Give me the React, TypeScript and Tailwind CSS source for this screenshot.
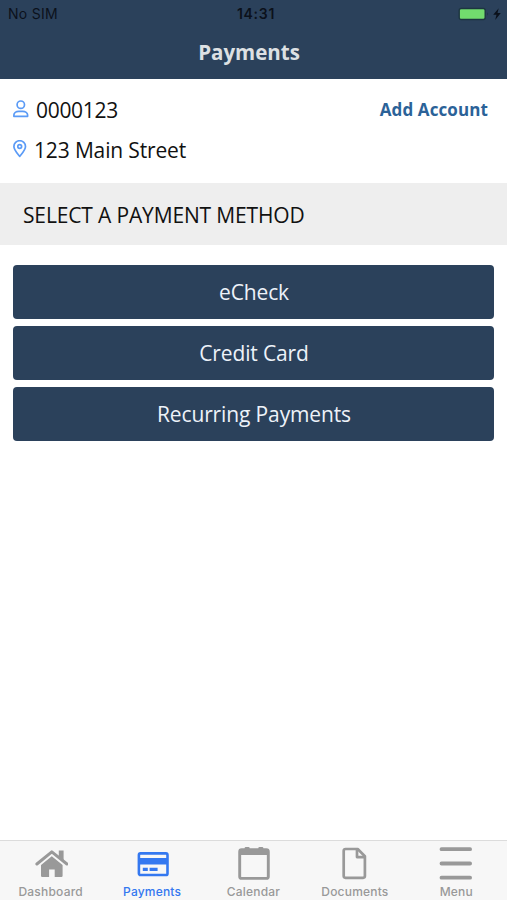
import type { ReactNode } from "react";

const methods = ["eCheck", "Credit Card", "Recurring Payments"];

function HomeIcon() {
  return (
    <svg viewBox="0 0 34 34" className="h-[34px] w-[34px]" fill="currentColor">
      <path d="M17.8 9.2 28.6 18v10.8a1.2 1.2 0 0 1-1.2 1.2h-6.7v-7.6h-5.6V30H8.2A1.2 1.2 0 0 1 7 28.8V18z" />
      <path
        d="M2.9 17 17.8 4.9 32.9 17"
        fill="none"
        stroke="currentColor"
        strokeWidth="3"
        strokeLinecap="round"
        strokeLinejoin="round"
      />
      <path d="M24.8 3.4h4.8v11.4L24.8 11z" />
    </svg>
  );
}

function CardIcon() {
  return (
    <svg viewBox="0 0 34 34" className="h-[34px] w-[34px]" fill="currentColor">
      <rect x="3.9" y="6.4" width="28.6" height="21.6" rx="1.6" fill="none" stroke="currentColor" strokeWidth="2.6" />
      <path d="M3 11h30v6.4H3zM7.8 20.7h5V24h-5zM14.6 20.7h8V24h-8z" />
    </svg>
  );
}

function CalendarIcon() {
  return (
    <svg viewBox="0 0 34 34" className="h-[34px] w-[34px]" fill="currentColor">
      <rect x="2.7" y="2.8" width="28.6" height="28.6" rx="2" fill="none" stroke="currentColor" strokeWidth="2.9" />
      <path d="M2.4 2.6h29.2V8H2.4zM7.6 1.3A1.2 1.2 0 0 1 8.8.1h2.7a1.2 1.2 0 0 1 1.2 1.2V3H7.6zM21.3 1.3A1.2 1.2 0 0 1 22.5.1h2.7a1.2 1.2 0 0 1 1.2 1.2V3h-5.1z" />
    </svg>
  );
}

function DocumentIcon() {
  return (
    <svg viewBox="0 0 34 34" className="h-[34px] w-[34px]" fill="none" stroke="currentColor" strokeWidth="2.7" strokeLinejoin="round">
      <path d="M7.4 2h12.3l7.2 7.2v19.9a1.7 1.7 0 0 1-1.7 1.7H7.4a1.7 1.7 0 0 1-1.7-1.7V3.7A1.7 1.7 0 0 1 7.4 2z" />
      <path d="M19 2.4v7.7h7.7" />
    </svg>
  );
}

function MenuIcon() {
  return (
    <svg viewBox="0 0 34 34" className="h-[34px] w-[34px]" fill="none" stroke="currentColor" strokeWidth="3.8" strokeLinecap="round">
      <path d="M2.5 2.2h28.6M2.5 16.5h28.6M2.5 30.7h28.6" />
    </svg>
  );
}

function Tab({ label, active, children }: { label: string; active?: boolean; children: ReactNode }) {
  return (
    <button
      className={`flex flex-1 basis-0 flex-col items-center pt-[6px] ${
        active ? "text-[#3478f0]" : "text-[#999999]"
      }`}
    >
      {children}
      <span className="mt-[3px] font-[Inter,sans-serif] text-[12px] leading-[15px] font-medium tracking-[0.2px]">
        {label}
      </span>
    </button>
  );
}

export default function App() {
  return (
    <div className="flex h-[900px] w-full flex-col bg-white font-['Open_Sans',sans-serif] text-[#111111]">
      {/* Status bar + title */}
      <header className="h-[79px] bg-[#2b415b]">
        <div className="grid h-[27px] grid-cols-3 items-center pr-[5px] pl-[8px] font-[Inter,sans-serif] text-[14px] text-[#0b111b]">
          <span className="tracking-[0.3px]">No SIM</span>
          <span className="pl-[2px] text-center font-semibold tracking-[0.7px]">14:31</span>
          <svg viewBox="0 0 44 14" className="h-[14px] w-[44px] justify-self-end">
            <rect x="1.2" y="1.5" width="26" height="11" rx="2" fill="#72dc6e" stroke="#1d3540" strokeWidth="1.4" />
            <path d="M29.3 5.5c1 .3 1 2.7 0 3z" fill="#1d3540" />
            <path d="M40.7 1.2 35.2 7.8h3.3l-1.3 5.1L42.8 6h-3.3z" fill="#0b111b" />
          </svg>
        </div>
        <h1 className="pr-[9px] text-center text-[20.5px] leading-[50px] font-bold text-[#dde0e3]">Payments</h1>
      </header>

      {/* Account */}
      <section className="h-[104px] px-[13px] pt-[10px] text-[21px] tracking-[-0.15px]">
        <div className="flex h-[40px] items-center">
          <svg viewBox="0 0 16 18" className="mr-[7px] h-[18px] w-[16px]" fill="none" stroke="#5b9bf6" strokeWidth="1.7">
            <circle cx="7.8" cy="4.7" r="3.7" />
            <path d="M.9 16.3v-1.2c0-2.2 2.2-3.8 4.7-3.8h4.2c2.5 0 4.8 1.6 4.8 3.8v1.2z" strokeLinejoin="round" />
          </svg>
          <span className="pt-[3px] tracking-[-0.3px]">0000123</span>
          <a className="ml-auto pt-[1px] pr-[6px] text-[17px] font-bold tracking-[0.1px] text-[#2b6298]">Add Account</a>
        </div>
        <div className="flex h-[40px] items-center">
          <svg viewBox="0 0 14 18" className="mr-[7px] h-[18px] w-[14px]" fill="none" stroke="#5b9bf6" strokeWidth="1.7">
            <path d="M6.7 16.4C4.4 13.5.9 9.9.9 6.5a5.8 5.8 0 0 1 11.6 0c0 3.4-3.5 7-5.8 9.9z" strokeLinejoin="round" />
            <circle cx="6.7" cy="6.5" r="1.9" />
          </svg>
          <span className="pt-[3px]">123 Main Street</span>
        </div>
      </section>

      <h2 className="h-[62px] bg-[#eeeeee] pl-[23px] text-[21px] leading-[64px] tracking-[-0.15px]">
        SELECT A PAYMENT METHOD
      </h2>

      {/* Payment methods */}
      <main className="flex flex-1 flex-col gap-[7px] px-[13px] pt-[20px]">
        {methods.map((label) => (
          <button
            key={label}
            className="h-[54px] w-full rounded-[4px] bg-[#2b415b] pt-[2px] pl-px text-[21px] tracking-[-0.13px] text-[#edf2f9]"
          >
            {label}
          </button>
        ))}
      </main>

      {/* Tab bar */}
      <nav className="flex h-[60px] border-t border-[#dcdcdc] bg-[#f7f7f7]">
        <Tab label="Dashboard">
          <HomeIcon />
        </Tab>
        <Tab label="Payments" active>
          <CardIcon />
        </Tab>
        <Tab label="Calendar">
          <CalendarIcon />
        </Tab>
        <Tab label="Documents">
          <DocumentIcon />
        </Tab>
        <Tab label="Menu">
          <MenuIcon />
        </Tab>
      </nav>
    </div>
  );
}
